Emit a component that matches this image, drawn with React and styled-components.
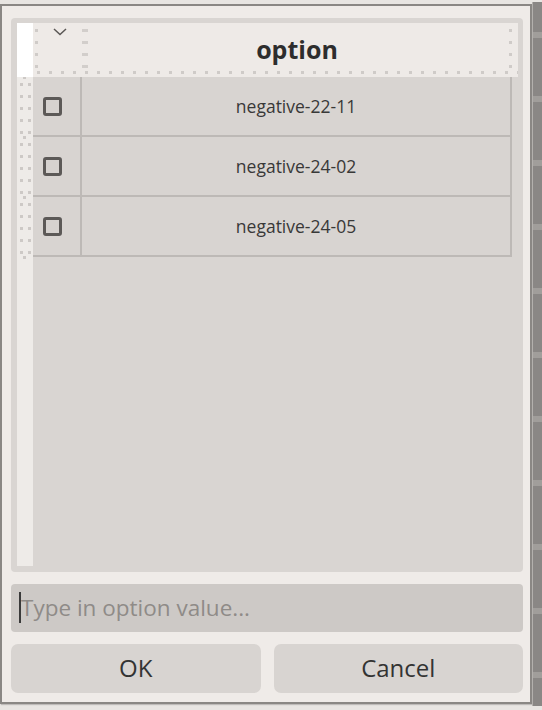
import styled, { createGlobalStyle } from "styled-components";

const GlobalStyle = createGlobalStyle`
    html, body {
        margin: 0;
        padding: 0;
        background: #e8e5e2;
    }
    body {
        font-family: "Open Sans", "DejaVu Sans", sans-serif;
    }
`;

const options = ["negative-22-11", "negative-24-02", "negative-24-05"];

const App = () => {
    return (
        <>
            <GlobalStyle />
            <Screen>
                <Dialog>
                    <TablePanel>
                        <Gutter>
                            <CornerCell />
                            <RowMarkers $rows={options.length} />
                        </Gutter>
                        <Table>
                            <HeaderRow>
                                <CheckHeader>
                                    <svg width="14" height="8" viewBox="0 0 14 8">
                                        <polyline
                                            points="1,1 7,6.5 13,1"
                                            fill="none"
                                            stroke="#5a5755"
                                            strokeWidth="1.5"
                                        />
                                    </svg>
                                </CheckHeader>
                                <OptionHeader>option</OptionHeader>
                                <HeaderFill />
                            </HeaderRow>
                            {options.map((option) => (
                                <Row key={option}>
                                    <CheckCell>
                                        <Checkbox />
                                    </CheckCell>
                                    <ValueCell>{option}</ValueCell>
                                </Row>
                            ))}
                        </Table>
                    </TablePanel>
                    <InputWrap>
                        <OptionInput placeholder="Type in option value..." />
                    </InputWrap>
                    <ButtonRow>
                        <DialogButton>OK</DialogButton>
                        <DialogButton>Cancel</DialogButton>
                    </ButtonRow>
                </Dialog>
                <Backdrop />
            </Screen>
        </>
    );
};

export default App;

const Screen = styled.div`
    display: flex;
    align-items: flex-start;
    width: 542px;
    height: 710px;
    overflow: hidden;
    background: #e8e5e2;
`;

const Dialog = styled.div`
    flex: none;
    box-sizing: border-box;
    width: 532px;
    height: 700px;
    margin-top: 4px;
    padding: 12px 7px 9px 9px;
    border: 2px solid #8a8784;
    box-shadow: 1px 1px 1px rgba(0, 0, 0, 0.18);
    background: #efebe8;
    display: flex;
    flex-direction: column;
    gap: 12px;
`;

const Backdrop = styled.div`
    flex: none;
    box-sizing: border-box;
    width: 10px;
    height: 704px;
    margin-top: 2px;
    border-left: 1px solid #b3b0ad;
    background-color: #8a8785;
    background-image: repeating-linear-gradient(
        to bottom,
        transparent 0 30px,
        #a19e9b 30px 36px,
        transparent 36px 64px
    );
`;

const TablePanel = styled.div`
    flex: 1;
    min-height: 0;
    display: flex;
    padding: 5px 5px 6px 6px;
    border-radius: 4px;
    background: #d9d5d2;
`;

const Gutter = styled.div`
    width: 16px;
    display: flex;
    flex-direction: column;
    background: #eeebe8;
`;

const CornerCell = styled.div`
    height: 54px;
    background: #ffffff;
`;

const RowMarkers = styled.div`
    height: ${({ $rows }) => $rows * 60 + 3}px;
    background:
        linear-gradient(#cdc9c6 3px, transparent 3px) 3px 6px / 3px 12px repeat-y,
        linear-gradient(#cdc9c6 3px, transparent 3px) 11px 6px / 3px 12px repeat-y,
        linear-gradient(#cdc9c6 3px, transparent 3px) 6px 59px / 3px 60px repeat-y;
`;

const Table = styled.div`
    flex: 1;
    display: flex;
    flex-direction: column;
`;

const HeaderRow = styled.div`
    height: 54px;
    display: grid;
    grid-template-columns: 49px 430px 1fr;
    background:
        linear-gradient(to right, #cfcbc8 3px, transparent 3px) 4px calc(100% - 3px) / 12px 3px repeat-x,
        #eeeae7;
`;

const CheckHeader = styled.div`
    display: flex;
    justify-content: center;
    align-items: flex-start;
    padding: 5px 0 0 5px;
    background: linear-gradient(#cfcbc8 3px, transparent 3px) 2px 6px / 3px 12px repeat-y;
`;

const OptionHeader = styled.div`
    display: flex;
    align-items: center;
    justify-content: center;
    font-size: 25px;
    font-weight: 700;
    color: #2d2d2d;
    padding-bottom: 2px;
    background:
        linear-gradient(#d2cecb 3px, transparent 3px) 0 6px / 6px 12px repeat-y,
        linear-gradient(#cfcbc8 3px, transparent 3px) right 0 top 6px / 3px 12px repeat-y;
`;

const HeaderFill = styled.div``;

const Row = styled.div`
    box-sizing: border-box;
    width: 479px;
    height: 60px;
    display: grid;
    grid-template-columns: 49px 1fr;
    border-right: 2px solid #bdb9b6;
    border-bottom: 2px solid #bdb9b6;
    background: #d8d4d1;
`;

const CheckCell = styled.div`
    display: flex;
    align-items: center;
    padding-left: 10px;
    border-right: 2px solid #bdb9b6;
`;

const Checkbox = styled.span`
    box-sizing: border-box;
    width: 19px;
    height: 19px;
    border: 3px solid #5c5957;
    border-radius: 3px;
    background: #d6d2cf;
`;

const ValueCell = styled.div`
    display: flex;
    align-items: center;
    justify-content: center;
    font-size: 17.5px;
    color: #383838;
`;

const InputWrap = styled.div`
    position: relative;
    height: 48px;

    &::before {
        content: "";
        position: absolute;
        left: 8px;
        top: 8px;
        width: 2px;
        height: 31px;
        background: #3a3a3a;
    }
`;

const OptionInput = styled.input`
    box-sizing: border-box;
    width: 100%;
    height: 100%;
    padding: 0 0 2px 10px;
    border: none;
    border-radius: 4px;
    outline: none;
    background: #cdc9c6;
    font-family: "Open Sans", "DejaVu Sans", sans-serif;
    font-size: 22.5px;
    color: #333;

    &::placeholder {
        color: #8f8b88;
    }
`;

const ButtonRow = styled.div`
    display: grid;
    grid-template-columns: 1fr 1fr;
    gap: 13px;
    height: 49px;
`;

const DialogButton = styled.button`
    border: none;
    border-radius: 7px;
    background: #d8d4d1;
    font-family: "Open Sans", "DejaVu Sans", sans-serif;
    font-size: 24px;
    color: #333;
    padding: 0 0 2px;
`;
